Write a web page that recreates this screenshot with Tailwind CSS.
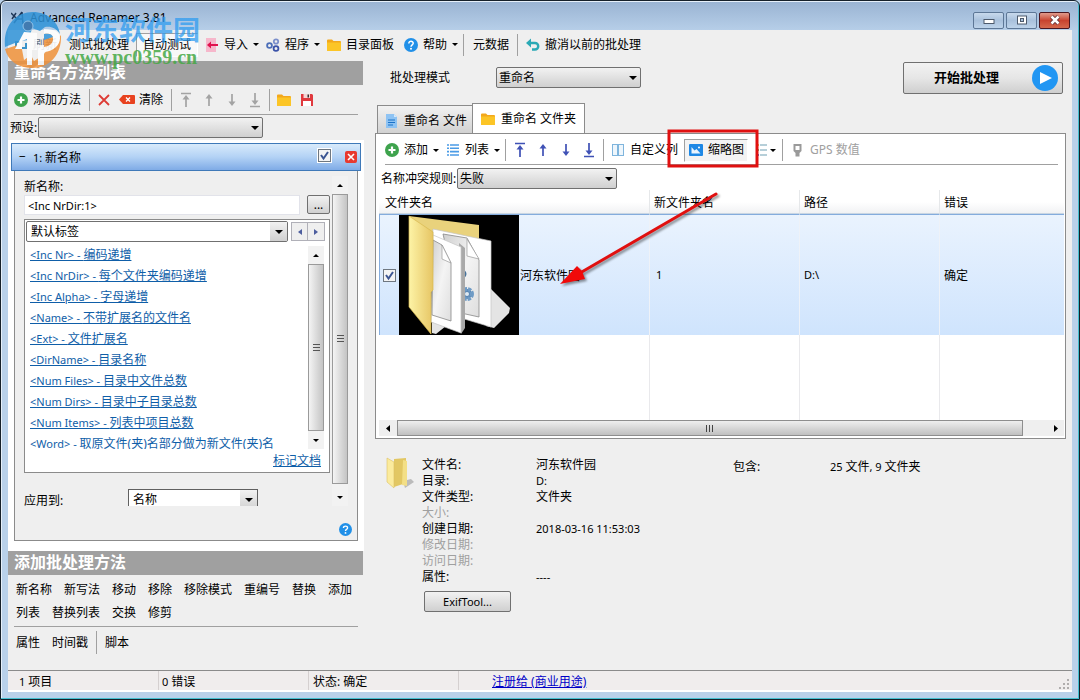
<!DOCTYPE html>
<html lang="zh-CN">
<head>
  <meta charset="UTF-8" />
  <meta name="viewport" content="width=device-width, initial-scale=1.0"/>
  <title>Advanced Renamer 3.81</title>
  <script src="https://cdn.jsdelivr.net/npm/@tailwindcss/browser@4"></script>
</head>
<body class="bg-[#b9d1ea] text-black text-xs font-['Noto_Sans','Noto_Sans_CJK_SC',sans-serif]">

  <!-- Shared icons -->
  <svg class="hidden">
    <symbol id="caret" viewBox="0 0 8 4"><path d="M0 0h8L4 4z"/></symbol>
    <symbol id="add" viewBox="0 0 14 14"><circle cx="7" cy="7" r="7" fill="#3ea34d"/><path d="M7 3.500v7M3.500 7h7" stroke="#fff" stroke-width="2.200"/></symbol>
    <symbol id="folder" viewBox="0 0 14 14"><path d="M0 2.500a1 1 0 0 1 1-1h4l1.500 1.500H13a1 1 0 0 1 1 1V12a1 1 0 0 1-1 1H1a1 1 0 0 1-1-1z" fill="#f3a81c"/><path d="M0 4.500h14V12a1 1 0 0 1-1 1H1a1 1 0 0 1-1-1z" fill="#fcc526"/></symbol>
    <symbol id="help" viewBox="0 0 14 14"><circle cx="7" cy="7" r="7" fill="#2190e8"/><path d="M4.800 5.400C4.800 2.600 9.300 2.700 9.200 5.300 9.100 6.800 7 6.900 7 8.700" fill="none" stroke="#fff" stroke-width="1.500"/><circle cx="7" cy="10.700" r="1" fill="#fff"/></symbol>
    <symbol id="up" viewBox="0 0 14 16"><path d="M7 14V5" fill="none" stroke="currentColor" stroke-width="1.700"/><path d="M7 2l3.500 4.500h-7z" fill="currentColor"/></symbol>
    <symbol id="down" viewBox="0 0 14 16"><path d="M7 2v9" fill="none" stroke="currentColor" stroke-width="1.700"/><path d="M7 14l3.500-4.500h-7z" fill="currentColor"/></symbol>
    <symbol id="top" viewBox="0 0 14 16"><path d="M2 1.500h10M7 15V7" fill="none" stroke="currentColor" stroke-width="1.700"/><path d="M7 3l3.500 4.500h-7z" fill="currentColor"/></symbol>
    <symbol id="bottom" viewBox="0 0 14 16"><path d="M2 14.500h10M7 1v8" fill="none" stroke="currentColor" stroke-width="1.700"/><path d="M7 13l3.500-4.500h-7z" fill="currentColor"/></symbol>
  </svg>

  <div class="relative min-h-screen flex flex-col border border-[#15202a] rounded-t-md px-[7px] pb-[7px] bg-[#b9d1ea] shadow-[inset_-1px_-1px_0_#45bfd0,inset_1px_1px_0_#e6f0fa]">

    <!-- Title bar -->
    <header class="-mx-[6px] mt-px px-[6px] h-7 flex items-center justify-between rounded-t bg-linear-to-b from-[#9ab4d3] to-[#b6cee8]">
      <div class="flex items-center gap-[5px] pl-[3px] pt-[3px]">
        <svg class="w-[14px] h-[14px]" viewBox="0 0 14 14" fill="none" stroke="#1d3557"><path d="M0 2l6 6M5 2L1 8M3 12L11 1M11 1l1 12M6 8h6" stroke-width="1.500"/></svg>
        <h1 class="text-xs leading-4">Advanced Renamer 3.81</h1>
      </div>
      <div class="flex gap-[2px] pt-2 pr-[2px]">
        <button aria-label="最小化" class="w-[31px] h-[17px] flex items-center justify-center rounded-xs border border-[#5d7796] bg-linear-to-b from-[#c8d9ec] via-[#a9c1dc] to-[#bdd3ea]">
          <svg class="w-3 h-3" viewBox="0 0 12 12"><rect x="1" y="5.500" width="10" height="4" fill="#fff" stroke="#4d5a6c"/></svg>
        </button>
        <button aria-label="最大化" class="w-[31px] h-[17px] flex items-center justify-center rounded-xs border border-[#5d7796] bg-linear-to-b from-[#c8d9ec] via-[#a9c1dc] to-[#bdd3ea]">
          <svg class="w-3 h-3" viewBox="0 0 12 12"><rect x="1.500" y="2" width="9" height="8" fill="#fff" stroke="#4d5a6c"/><rect x="4.500" y="4.500" width="3" height="3" fill="#a9c1dc" stroke="#4d5a6c"/></svg>
        </button>
        <button aria-label="关闭" class="w-[31px] h-[17px] flex items-center justify-center rounded-xs border border-[#4b1620] bg-linear-to-b from-[#e09a8c] via-[#c8432f] to-[#d5674c]">
          <svg class="w-3 h-3" viewBox="0 0 12 12"><path d="M2.500 2.500l7 7M9.500 2.500l-7 7" stroke="#5a2a33" stroke-width="4"/><path d="M2.500 2.500l7 7M9.500 2.500l-7 7" stroke="#fff" stroke-width="2.500"/></svg>
        </button>
      </div>
    </header>

    <div class="flex-1 flex flex-col bg-[#efefef]">

      <!-- Main toolbar -->
      <nav class="h-[31px] pb-[2px] pl-[6px] flex items-center whitespace-nowrap">
        <button class="flex items-center gap-[5px] text-gray-500">
          <svg class="w-[14px] h-[14px]" viewBox="0 0 14 14" fill="none" stroke="#3b93c9" stroke-width="2"><path d="M2 9V4h4M12 5v5H8"/></svg>刷新
        </button>
        <button class="ml-3">测试批处理</button>
        <button class="ml-[7px] w-[62px] h-6 border border-[#a0a0a0] border-b-white border-r-white bg-[#f8f8f8]">自动测试</button>
        <button class="ml-[7px] flex items-center gap-[5px]">
          <svg class="w-[14px] h-[14px]" viewBox="0 0 14 14"><path d="M1 0h10v14H1z" fill="#f6b7cb"/><path d="M13 7H5" stroke="#e0134f" stroke-width="2"/><path d="M2 7l4-3.500v7z" fill="#e0134f"/></svg>导入
          <svg class="w-[6px] h-[3px]"><use href="#caret"/></svg>
        </button>
        <button class="ml-[7px] flex items-center gap-[5px]">
          <svg class="w-[14px] h-[14px]" viewBox="0 0 14 14" fill="none" stroke-width="1.800"><circle cx="3.500" cy="7.500" r="2.400" stroke="#4d6fb8"/><circle cx="10" cy="3.500" r="2.200" stroke="#7b8fcb"/><circle cx="10" cy="10.500" r="2.400" stroke="#3a52a8"/></svg>程序
          <svg class="w-[6px] h-[3px]"><use href="#caret"/></svg>
        </button>
        <button class="ml-[7px] flex items-center gap-[5px]"><svg class="w-[14px] h-[14px]"><use href="#folder"/></svg>目录面板</button>
        <button class="ml-[10px] flex items-center gap-[5px]">
          <svg class="w-[14px] h-[14px]"><use href="#help"/></svg>帮助
          <svg class="w-[6px] h-[3px]"><use href="#caret"/></svg>
        </button>
        <span class="ml-[5px] w-px h-[22px] bg-[#a0a0a0]"></span>
        <button class="ml-[9px]">元数据</button>
        <span class="ml-2 w-px h-[22px] bg-[#a0a0a0]"></span>
        <button class="ml-2 flex items-center gap-[5px]">
          <svg class="w-[14px] h-[14px]" viewBox="0 0 14 14"><path d="M4 5h5a3 3 0 0 1 0 6.500H6" fill="none" stroke="#2aa9b5" stroke-width="2.400"/><path d="M0 5l5-4.500v9z" fill="#2aa9b5"/></svg>撤消以前的批处理
        </button>
      </nav>

      <div class="flex-1 flex">

        <!-- Left column -->
        <aside class="w-[355px] shrink-0 flex flex-col">
          <h2 class="h-6 px-[6px] bg-[#a0a0a0] text-white text-base leading-[22px] font-bold">重命名方法列表</h2>
          <div class="ml-[6px] mr-[5px] h-[30px] flex items-center border-b border-[#a0a0a0] whitespace-nowrap">
            <button class="flex items-center gap-[5px]"><svg class="w-[14px] h-[14px]"><use href="#add"/></svg>添加方法</button>
            <span class="ml-2 w-px h-[22px] bg-[#a0a0a0]"></span>
            <button aria-label="删除" class="ml-2"><svg class="w-3 h-3" viewBox="0 0 12 12"><path d="M1 1l10 10M11 1L1 11" stroke="#dd3b35" stroke-width="1.800"/></svg></button>
            <button class="ml-[9px] flex items-center gap-1">
              <svg class="w-4 h-[10px]" viewBox="0 0 16 10"><path d="M4 0h11a1 1 0 0 1 1 1v7a1 1 0 0 1-1 1H4L0 4.500z" fill="#e8421f"/><path d="M7 2.500l4 4M11 2.500l-4 4" stroke="#fff" stroke-width="1.300"/></svg>清除
            </button>
            <span class="ml-2 w-px h-[22px] bg-[#a0a0a0]"></span>
            <div class="ml-[7px] flex gap-[9px] text-[#a3a3a3]">
              <button aria-label="置顶"><svg class="w-[14px] h-4"><use href="#top"/></svg></button>
              <button aria-label="上移"><svg class="w-[14px] h-4"><use href="#up"/></svg></button>
              <button aria-label="下移"><svg class="w-[14px] h-4"><use href="#down"/></svg></button>
              <button aria-label="置底"><svg class="w-[14px] h-4"><use href="#bottom"/></svg></button>
            </div>
            <span class="ml-[7px] w-px h-[22px] bg-[#a0a0a0]"></span>
            <button aria-label="打开" class="ml-[7px]"><svg class="w-[14px] h-[14px]"><use href="#folder"/></svg></button>
            <button aria-label="保存" class="ml-[9px]"><svg class="w-[14px] h-[14px]" viewBox="0 0 14 14"><path d="M1 1h11l1 1v11H1z" fill="#e0393e"/><path d="M3.500 1h6.500v4H3.500z" fill="#f6d5d5"/><path d="M7.500 1.500h1.500v3H7.500z" fill="#333"/><path d="M3 8h8v5H3z" fill="#fff"/></svg></button>
          </div>
          <div class="h-[25px] pl-[2px] pt-[2px] flex items-start">
            <label for="preset" class="w-7 leading-[22px] whitespace-nowrap">预设:</label>
            <div class="relative">
              <select id="preset" class="block appearance-none w-[225px] h-[21px] pl-1 rounded-xs border border-[#707070] bg-linear-to-b from-[#f2f2f2] to-[#d0d0d0]"><option></option></select>
              <svg class="absolute right-1 top-[9px] w-2 h-1 pointer-events-none"><use href="#caret"/></svg>
            </div>
          </div>

          <!-- Method card -->
          <section class="bg-white -mr-px pl-[3px] pr-[3px] pt-[3px] pb-[10px]">
            <div class="h-7 px-[7px] flex items-center border border-[#3f79b8] bg-linear-to-b from-[#d9ebfb] via-[#b3d2f5] to-[#7fabe6]">
              <button aria-label="折叠" class="w-[14px] text-left">−</button>
              <h3 class="pt-[2px]"><span class="text-[11px]">1: </span>新名称</h3>
              <span class="relative ml-auto w-[13px] h-[13px] -top-[2px]">
                <input type="checkbox" checked aria-label="启用方法" class="block appearance-none w-[13px] h-[13px] border border-[#6f7780] bg-[#f4f4f4] ring-1 ring-white" />
                <svg class="absolute inset-0 w-[13px] h-[13px] pointer-events-none" viewBox="0 0 13 13" fill="none" stroke="#3c5592" stroke-width="2"><path d="M3 6l2.500 3.500L10 3"/></svg>
              </span>
              <button aria-label="移除方法" class="ml-[14px] -mr-1 w-3 h-3 rounded-xs bg-[#e8392f]">
                <svg class="w-3 h-3" viewBox="0 0 12 12"><path d="M3 3l6 6M9 3l-6 6" stroke="#fff" stroke-width="1.600"/></svg>
              </button>
            </div>
            <div class="mx-[3px] border border-t-0 border-[#8b8b8b] bg-[#efefef]">
              <div class="flex h-[335px] overflow-hidden">
                <div class="w-[306px] ml-[9px] pt-[6px]">
                  <label for="newname" class="block h-[18px] leading-5">新名称:</label>
                  <div class="flex justify-between">
                    <input id="newname" type="text" value="&lt;Inc NrDir:1&gt;" class="w-[276px] h-5 pl-[3px] text-[11px] leading-4 bg-white border border-[#e2e3ea]" />
                    <button class="w-[23px] h-[19px] rounded-xs border border-[#707070] bg-linear-to-b from-[#f2f2f2] to-[#d0d0d0] leading-4">...</button>
                  </div>
                  <div class="mt-1 p-px border border-[#8b8b8b] bg-white">
                    <div class="flex">
                      <div class="relative">
                        <select aria-label="标签" class="block appearance-none w-[262px] h-[21px] pl-1 rounded-xs border border-[#707070] bg-white"><option>默认标签</option></select>
                        <span class="absolute right-px top-px w-[17px] h-[19px] flex items-center justify-center bg-linear-to-b from-[#f2f2f2] to-[#d0d0d0] pointer-events-none"><svg class="w-2 h-1"><use href="#caret"/></svg></span>
                      </div>
                      <button aria-label="上一组" class="ml-[3px] mt-px w-[17px] h-[19px] flex items-center justify-center border border-[#b0b0b8] bg-[#efefef]"><svg class="w-[4px] h-[6px]" viewBox="0 0 4 6"><path d="M4 0v6L0 3z" fill="#4c5d9e"/></svg></button>
                      <button aria-label="下一组" class="mt-px w-[17px] h-[19px] flex items-center justify-center border border-l-0 border-[#b0b0b8] bg-[#efefef]"><svg class="w-[4px] h-[6px]" viewBox="0 0 4 6"><path d="M0 0v6l4-3z" fill="#4c5d9e"/></svg></button>
                    </div>
                    <div class="mt-[2px] h-[205px] flex justify-between overflow-hidden">
                      <ul class="pl-1 leading-[21px] text-[#0f5ea8] whitespace-nowrap underline">
                        <li><a href="#"><span class="text-[11px]">&lt;Inc Nr&gt; - </span>编码递增</a></li>
                        <li><a href="#"><span class="text-[11px]">&lt;Inc NrDir&gt; - </span>每个文件夹编码递增</a></li>
                        <li><a href="#"><span class="text-[11px]">&lt;Inc Alpha&gt; - </span>字母递增</a></li>
                        <li><a href="#"><span class="text-[11px]">&lt;Name&gt; - </span>不带扩展名的文件名</a></li>
                        <li><a href="#"><span class="text-[11px]">&lt;Ext&gt; - </span>文件扩展名</a></li>
                        <li><a href="#"><span class="text-[11px]">&lt;DirName&gt; - </span>目录名称</a></li>
                        <li><a href="#"><span class="text-[11px]">&lt;Num Files&gt; - </span>目录中文件总数</a></li>
                        <li><a href="#"><span class="text-[11px]">&lt;Num Dirs&gt; - </span>目录中子目录总数</a></li>
                        <li><a href="#"><span class="text-[11px]">&lt;Num Items&gt; - </span>列表中项目总数</a></li>
                        <li><a href="#"><span class="text-[11px]">&lt;Word&gt; - </span>取原文件(夹)名部分做为新文件(夹)名</a></li>
                      </ul>
                      <div class="w-4 mr-1 mt-[2px] flex flex-col bg-[#f2f2f2]">
                        <span class="h-[18px] flex items-center justify-center"><svg class="w-[6px] h-[3px] rotate-180"><use href="#caret"/></svg></span>
                        <span class="flex-1 flex items-center justify-center border border-[#9a9a9a] bg-linear-to-r from-[#f4f4f4] to-[#c4c4c4]"><svg class="w-[7px] h-2" viewBox="0 0 7 8"><path d="M0 .5h7M0 3.500h7M0 6.500h7" stroke="#555"/></svg></span>
                        <span class="h-[18px] flex items-center justify-center"><svg class="w-[6px] h-[3px]"><use href="#caret"/></svg></span>
                      </div>
                    </div>
                    <p class="h-[22px] pr-[7px] text-right leading-6"><a href="#" class="text-[#0f5ea8] underline">标记文档</a></p>
                  </div>
                  <div class="mt-4 flex">
                    <label for="apply" class="w-[104px] leading-6">应用到:</label>
                    <div class="relative">
                      <select id="apply" class="block appearance-none w-[130px] h-[22px] pl-1 border border-[#606060] bg-white"><option>名称</option></select>
                      <span class="absolute right-px top-px w-[17px] h-5 flex items-center justify-center bg-linear-to-b from-[#f2f2f2] to-[#d0d0d0] pointer-events-none"><svg class="w-2 h-1"><use href="#caret"/></svg></span>
                    </div>
                  </div>
                </div>
                <div class="w-4 ml-[2px] mt-[5px] flex flex-col bg-[#f2f2f2]">
                  <span class="h-[18px] flex items-center justify-center"><svg class="w-[6px] h-[3px] rotate-180"><use href="#caret"/></svg></span>
                  <span class="flex-1 flex items-center justify-center border border-[#9a9a9a] bg-linear-to-r from-[#f4f4f4] to-[#c4c4c4]"><svg class="w-[7px] h-2" viewBox="0 0 7 8"><path d="M0 .5h7M0 3.500h7M0 6.500h7" stroke="#555"/></svg></span>
                  <span class="h-[22px] pt-[5px] flex items-center justify-center"><svg class="w-[6px] h-[3px]"><use href="#caret"/></svg></span>
                </div>
              </div>
              <div class="h-[34px] pr-[5px] flex items-end justify-end pb-1">
                <button aria-label="帮助"><svg class="w-[13px] h-[13px]" viewBox="0 0 14 14"><use href="#help"/></svg></button>
              </div>
            </div>
          </section>

          <h2 class="h-6 px-[6px] bg-[#a0a0a0] text-white text-base leading-[22px] font-bold">添加批处理方法</h2>
          <div class="ml-[6px] mr-[5px] pl-[2px] pt-[3px] pb-[2px] flex flex-wrap gap-x-3 leading-[23px] border-b border-[#a0a0a0]">
            <button>新名称</button>
            <button>新写法</button>
            <button>移动</button>
            <button>移除</button>
            <button>移除模式</button>
            <button>重编号</button>
            <button>替换</button>
            <button>添加</button>
            <button>列表</button>
            <button>替换列表</button>
            <button>交换</button>
            <button>修剪</button>
          </div>
          <div class="pl-2 pt-1 flex gap-3 leading-[23px]">
            <button>属性</button>
            <button>时间戳</button>
            <span class="-mx-1 w-px bg-[#a0a0a0]"></span>
            <button>脚本</button>
          </div>
        </aside>

        <!-- Right column -->
        <main class="flex-1 min-w-0 pl-3 pr-[6px]">
          <div class="h-[42px] pt-px pl-[15px] pr-[3px] flex items-start">
            <label for="mode" class="w-[106px] leading-8">批处理模式</label>
            <div class="relative mt-[5px]">
              <select id="mode" class="block appearance-none w-[145px] h-[21px] pl-[2px] rounded-xs border border-[#707070] bg-linear-to-b from-[#f2f2f2] to-[#d0d0d0]"><option>重命名</option></select>
              <svg class="absolute right-1 top-[9px] w-2 h-1 pointer-events-none"><use href="#caret"/></svg>
            </div>
            <button class="ml-auto w-40 h-8 pl-[30px] pr-1 flex items-center justify-between rounded-xs border border-[#707070] bg-linear-to-b from-[#f2f2f2] via-[#e6e6e6] to-[#cfcfcf] text-[13px] font-bold">
              开始批处理
              <svg class="w-[26px] h-[26px]" viewBox="0 0 26 26"><circle cx="13" cy="13" r="13" fill="#2196f3"/><path d="M8 7v12l12-6z" fill="#fff"/></svg>
            </button>
          </div>

          <div class="flex items-end pl-[2px] whitespace-nowrap" role="tablist">
            <button role="tab" class="w-[95px] h-[28px] pl-[7px] pt-[2px] flex items-center gap-[5px] border border-b-0 border-r-0 border-[#8b8b8b] bg-linear-to-b from-[#f2f2f2] to-[#d2d2d2]">
              <svg class="w-[14px] h-[14px] shrink-0" viewBox="0 0 14 14"><path d="M1 0h8l3 3v11H1z" fill="#8ec3f3"/><path d="M9 0l3 3H9z" fill="#d3e8fb"/><path d="M3 6h7M3 8.500h7M3 11h5" stroke="#1a72c8"/></svg>重命名 文件
            </button>
            <button role="tab" aria-selected="true" class="relative w-[113px] h-[31px] -mb-px pl-2 flex items-center gap-[6px] border border-b-0 border-[#8b8b8b] bg-white">
              <svg class="w-[14px] h-[14px] shrink-0"><use href="#folder"/></svg>重命名 文件夹
            </button>
          </div>

          <section class="relative border border-[#8b8b8b] bg-white">
            <div class="ml-[9px] mr-[7px] h-[31px] pt-[2px] flex items-center border-b border-[#a0a0a0] whitespace-nowrap">
              <button class="flex items-center gap-[5px]"><svg class="w-[14px] h-[14px]"><use href="#add"/></svg>添加<svg class="w-[6px] h-[3px]"><use href="#caret"/></svg></button>
              <button class="ml-[7px] flex items-center gap-[5px]">
                <svg class="w-[14px] h-[14px]" viewBox="0 0 14 14"><path d="M4 2h9M4 5.300h9M4 8.600h9M4 12h9" stroke="#4a9be6" stroke-width="1.600"/><path d="M1 2h2M1 5.300h2M1 8.600h2M1 12h2" stroke="#4a9be6" stroke-width="1.600"/></svg>列表<svg class="w-[6px] h-[3px]"><use href="#caret"/></svg>
              </button>
              <span class="ml-[5px] w-px h-[22px] bg-[#a0a0a0]"></span>
              <div class="ml-[7px] flex gap-[9px] text-[#3f51b5]">
                <button aria-label="置顶"><svg class="w-[14px] h-4"><use href="#top"/></svg></button>
                <button aria-label="上移"><svg class="w-[14px] h-4"><use href="#up"/></svg></button>
                <button aria-label="下移"><svg class="w-[14px] h-4"><use href="#down"/></svg></button>
                <button aria-label="置底"><svg class="w-[14px] h-4"><use href="#bottom"/></svg></button>
              </div>
              <span class="ml-[7px] w-px h-[22px] bg-[#a0a0a0]"></span>
              <button class="ml-[7px] flex items-center gap-[5px]">
                <svg class="w-[14px] h-[14px]" viewBox="0 0 14 14" fill="#eef6fc" stroke="#7fb5dd"><rect x="1.500" y="1.500" width="5" height="11"/><rect x="7.500" y="1.500" width="5" height="11"/></svg>自定义列
              </button>
              <button class="ml-[6px] w-[64px] h-[23px] pl-1 flex items-center gap-[5px] border border-[#a0a0a0] border-r-white border-b-white bg-[#f3f3f3]">
                <svg class="w-[14px] h-[14px] shrink-0" viewBox="0 0 14 14"><rect y="1" width="14" height="12" rx="1" fill="#1e88e5"/><path d="M2.500 10.500V4l3 3.500 2-1.500 4 4.500z" fill="#e9f4fe"/><circle cx="10" cy="4.500" r="1" fill="#fff"/></svg>缩略图
              </button>
              <button aria-label="显示方式" class="ml-2 flex items-center">
                <svg class="w-[14px] h-[14px]" viewBox="0 0 14 14" stroke-width="1.600"><path d="M0 2h3" stroke="#f3a81c"/><path d="M0 7h3" stroke="#4caf50"/><path d="M0 12h3" stroke="#3f51b5"/><path d="M4 2h7M4 7h7M4 12h7" stroke="#9fc0cd"/></svg>
                <svg class="w-[6px] h-[3px]"><use href="#caret"/></svg>
              </button>
              <span class="ml-[6px] w-px h-[22px] bg-[#a0a0a0]"></span>
              <button class="ml-2 flex items-center gap-[5px] text-[#a0a0a0]">
                <svg class="w-[14px] h-[14px]" viewBox="0 0 14 14"><path d="M2.500 1h8v7l-2 2v3.500h-4V10l-2-2z" fill="#9a9a9a"/><rect x="4.500" y="3" width="4" height="4" fill="#fff"/></svg>GPS 数值
              </button>
            </div>

            <div class="h-[25px] pl-[5px] pt-[3px] flex items-start">
              <label for="conflict" class="w-[76px] leading-[22px] whitespace-nowrap">名称冲突规则:</label>
              <div class="relative">
                <select id="conflict" class="block appearance-none w-40 h-[21px] pl-[2px] rounded-xs border border-[#707070] bg-linear-to-b from-[#f2f2f2] to-[#d0d0d0]"><option>失败</option></select>
                <svg class="absolute right-1 top-[9px] w-2 h-1 pointer-events-none"><use href="#caret"/></svg>
              </div>
            </div>

            <div class="pl-[3px] pr-px pb-[2px]">
              <table class="w-full table-fixed border-separate border-spacing-0 text-left">
                <colgroup><col class="w-[271px]" /><col class="w-[150px]" /><col class="w-[140px]" /><col /></colgroup>
                <thead>
                  <tr class="h-6 bg-linear-to-b from-white via-white to-[#f0f1f3]">
                    <th class="pl-[6px] pt-[2px] font-normal border-r border-b border-r-[#e6e8ea] border-b-[#c9d6e3]">文件夹名</th>
                    <th class="pl-1 pt-[2px] font-normal border-r border-b border-r-[#e6e8ea] border-b-[#c9d6e3]">新文件夹名</th>
                    <th class="pl-1 pt-[2px] font-normal border-r border-b border-r-[#e6e8ea] border-b-[#c9d6e3]">路径</th>
                    <th class="pl-1 pt-[2px] font-normal border-b border-b-[#c9d6e3]">错误</th>
                  </tr>
                </thead>
                <tbody>
                  <tr class="bg-linear-to-b from-[#eaf3fe] to-[#cfe4fd]">
                    <td class="border-l border-t border-r border-l-[#84acdd] border-t-[#84acdd] border-r-[#eef2f8]">
                      <div class="flex items-center">
                        <span class="relative w-[13px] h-[13px] ml-[3px] mr-[3px]">
                          <input type="checkbox" checked aria-label="河东软件园" class="block appearance-none w-[13px] h-[13px] border border-[#6f7780] bg-[#f4f4f4]" />
                          <svg class="absolute inset-0 w-[13px] h-[13px] pointer-events-none" viewBox="0 0 13 13" fill="none" stroke="#3c5592" stroke-width="2"><path d="M3 6l2.500 3.500L10 3"/></svg>
                        </span>
                        <svg class="w-[120px] h-[120px] bg-black" viewBox="0 0 120 120">
                          <defs>
                            <linearGradient id="flap" x1="0" y1="0" x2="1" y2="0"><stop offset="0" stop-color="#fdf3a6"/><stop offset="1" stop-color="#e6c564"/></linearGradient>
                            <linearGradient id="page" x1="0" y1="0" x2="1" y2="1"><stop offset="0" stop-color="#cfcfcf"/><stop offset=".5" stop-color="#f4f4f4"/><stop offset="1" stop-color="#dedede"/></linearGradient>
                          </defs>
                          <path d="M10 1L80 10V40L34 60z" fill="#e9d27c"/>
                          <path d="M33 107l14 4-10 8-4-1zM92 74l19 19-1 5-15 15-8-2z" fill="#e4e4e4"/>
                          <path d="M34 14L92 26V112L62 103 34 80z" fill="#fff" stroke="#c4c4c4" stroke-width=".7"/>
                          <path d="M44 19L68 23 80 45V102L62 98z" fill="url(#page)" stroke="#888" stroke-width=".8"/>
                          <path d="M68 24v17l12 3z" fill="#fff" stroke="#999" stroke-width=".7"/>
                          <circle cx="63" cy="59" r="3" fill="#9db9d3" stroke="#47739b" stroke-width="3" stroke-dasharray="3 1"/>
                          <circle cx="68" cy="79" r="5" fill="#5b87b3" stroke="#6f9bc5" stroke-width="4" stroke-dasharray="3 1"/>
                          <circle cx="68" cy="79" r="2" fill="#dfe9f2"/>
                          <path d="M60 28l6 5v80l-4 6z" fill="#a9a9a9"/>
                          <path d="M34 20L62 32V118L32 107z" fill="#fff" stroke="#c4c4c4" stroke-width=".7"/>
                          <path d="M34 25L43 30 52 48V106L33 100z" fill="url(#page)" stroke="#888" stroke-width=".8"/>
                          <path d="M43 30v14l9 4z" fill="#fff" stroke="#999" stroke-width=".7"/>
                          <path d="M10 1L34 17V75l-2 2V119L10 92z" fill="url(#flap)" stroke="#d8b94f" stroke-width=".7"/>
                        </svg>
                        <span class="pl-px pt-[2px]">河东软件园</span>
                      </div>
                    </td>
                    <td class="pl-[6px] text-[11px] border-t border-r border-t-[#84acdd] border-r-[#eef2f8]">1</td>
                    <td class="pl-1 text-[11px] border-t border-r border-t-[#84acdd] border-r-[#eef2f8]">D:\</td>
                    <td class="pl-1 pt-[2px] border-t border-t-[#84acdd]">确定</td>
                  </tr>
                  <tr class="h-[85px]">
                    <td class="border-r border-[#e9e9ec]"></td>
                    <td class="border-r border-[#e9e9ec]"></td>
                    <td class="border-r border-[#e9e9ec]"></td>
                    <td></td>
                  </tr>
                </tbody>
              </table>
              <div class="h-4 flex bg-[#efefef]">
                <span class="w-[18px] flex items-center justify-center"><svg class="w-[4px] h-[7px]" viewBox="0 0 4 7"><path d="M4 0v7L0 3.500z"/></svg></span>
                <span class="flex-1 flex items-center justify-center border border-[#8e8e8e] bg-linear-to-b from-[#efefef] to-[#c0c0c0]"><svg class="w-2 h-[7px]" viewBox="0 0 8 7"><path d="M.5 0v7M3.500 0v7M6.500 0v7" stroke="#444"/></svg></span>
                <span class="w-[41px] flex items-center justify-end pr-[6px]"><svg class="w-[4px] h-[7px]" viewBox="0 0 4 7"><path d="M0 0v7l4-3.500z"/></svg></span>
              </div>
            </div>

            <!-- Callout: box round the thumbnail button, arrow to the folder -->
            <svg class="absolute left-[178px] -top-[6px] w-[210px] h-[165px] pointer-events-none drop-shadow-[2px_2px_1px_rgba(0,0,0,0.4)]" viewBox="0 0 210 165" fill="none" stroke="#e01010">
              <path d="M162 66L26 145" stroke-width="3" stroke-linecap="round"/>
              <path d="M6 156L23 138l5 5 3 8z" fill="#f00a0a" stroke="none"/>
            </svg>
            <svg class="absolute left-[178px] -top-[6px] w-[210px] h-[165px] pointer-events-none" viewBox="0 0 210 165" fill="none" stroke="#e01010"><rect x="115" y="3" width="88" height="35" stroke-width="3"/></svg>
          </section>

          <!-- File details -->
          <section class="flex items-start pt-[18px] pl-[10px]">
            <svg class="w-[37px] h-8 shrink-0" viewBox="0 0 37 32">
              <path d="M18 24l8-2 3 3-9 6z" fill="#bbb"/>
              <path d="M9 2l12-1v25L9 30z" fill="#e2c763"/>
              <path d="M18 3l4 1v25l-5-1z" fill="#f3df86"/>
              <path d="M2 1l7 4v26l-7-6z" fill="#fbeb9d" stroke="#dcc162" stroke-width=".6"/>
            </svg>
            <div>
              <dl class="grid grid-cols-[114px_197px] leading-4">
                <dt>文件名:</dt><dd>河东软件园</dd>
                <dt>目录:</dt><dd class="text-[11px] leading-4">D:</dd>
                <dt>文件类型:</dt><dd>文件夹</dd>
                <dt class="text-[#a0a0a0]">大小:</dt><dd></dd>
                <dt>创建日期:</dt><dd class="text-[11px] leading-4">2018-03-16 11:53:03</dd>
                <dt class="text-[#a0a0a0]">修改日期:</dt><dd></dd>
                <dt class="text-[#a0a0a0]">访问日期:</dt><dd></dd>
                <dt>属性:</dt><dd class="text-[11px] leading-4">----</dd>
              </dl>
              <button class="mt-[6px] ml-[2px] w-[87px] h-[21px] rounded-xs border border-[#707070] bg-linear-to-b from-[#f2f2f2] to-[#d0d0d0] text-[11px] leading-4">ExifTool...</button>
            </div>
            <dl class="grid grid-cols-[97px_auto] pt-[2px] leading-4 whitespace-nowrap">
              <dt>包含:</dt><dd><span class="text-[11px]">25 </span>文件<span class="text-[11px]">, 9 </span>文件夹</dd>
            </dl>
          </section>
        </main>
      </div>

      <!-- Status bar -->
      <footer class="h-[22px] flex border-t border-[#8b8b8b] border-b-2 border-b-white bg-[#f0eded] leading-[21px] whitespace-nowrap">
        <span class="w-[151px] pl-[11px] border-r border-[#d5d0d0]"><span class="text-[11px]">1 </span>项目</span>
        <span class="w-[150px] pl-[3px] border-r border-[#d5d0d0]"><span class="text-[11px]">0 </span>错误</span>
        <span class="w-[150px] pl-1 border-r border-[#d5d0d0]">状态: 确定</span>
        <a href="#" class="ml-[33px] text-[#0000c8] underline">注册给 (商业用途)</a>
        <svg class="ml-auto mr-[3px] mt-2 w-[10px] h-[10px]" viewBox="0 0 10 10" fill="#b0adad"><path d="M8 0h2v2H8zM4 4h2v2H4zM8 4h2v2H8zM0 8h2v2H0zM4 8h2v2H4zM8 8h2v2H8z"/></svg>
      </footer>
    </div>

    <!-- Site watermark -->
    <div class="absolute left-[3px] top-[10px] flex items-start gap-[3px] pointer-events-none">
      <svg class="w-[58px] h-[58px]" viewBox="0 0 58 58" opacity=".85">
        <path d="M1 36C-1 14 12 1 29 1c14 0 25 9 27 22-4-6-9-8-15-7l-5 4-8-3-3 12-9 1z" fill="#2f93d8"/>
        <path d="M1 38l16-5 3 16 7-5 3 6 9-6 6-7 8-8 4-5c1 20-12 33-28 33C14 57 4 50 1 38z" fill="#f0923a"/>
        <path d="M20 21l-9 17h7v-8l5-2v26h5V39h6v15h6V41c10-1 16-7 16-14 0-5-4-9-16-9v16h-7V22z" fill="#fff"/>
        <path d="M40 23c6-1 9 1 9 5s-3 7-9 8z" fill="#f0923a"/>
        <path d="M40 23c5-1 8 0 9 3l-9 3z" fill="#2f93d8"/>
        <circle cx="24" cy="15" r="5" fill="#2f6ea8" stroke="#8cc4ec"/>
      </svg>
      <div class="whitespace-nowrap font-bold">
        <p class="pt-[5px] text-[27px] leading-[27px] text-[#2f9cf0]/75">河东软件园</p>
        <p class="text-xl leading-7 font-['Liberation_Serif',serif] text-[#45a845]/85">www.pc0359.cn</p>
      </div>
    </div>
  </div>
</body>
</html>
